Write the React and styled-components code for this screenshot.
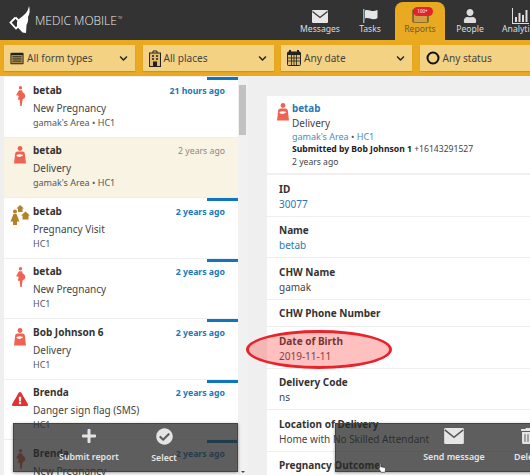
import React from "react";
import styled, { createGlobalStyle } from "styled-components";
import { FaUser, FaPlus, FaCheckCircle, FaChevronDown, FaTrashAlt, FaExclamationTriangle } from "react-icons/fa";

const GlobalStyle = createGlobalStyle`
  html, body {
    margin: 0;
    height: 475px;
    overflow: hidden;
    background: #efefef;
    font-family: "Noto Sans", "Open Sans", sans-serif;
    color: #333;
  }
`;

const reports = [
  { name: "betab", form: "New Pregnancy", place: "gamak's Area • HC1", time: "21 hours ago", icon: "pregnant", unread: true },
  { name: "betab", form: "Delivery", place: "gamak's Area • HC1", time: "2 years ago", icon: "delivery", selected: true },
  { name: "betab", form: "Pregnancy Visit", place: "HC1", time: "2 years ago", icon: "visit", unread: true },
  { name: "betab", form: "New Pregnancy", place: "HC1", time: "2 years ago", icon: "pregnant", unread: true },
  { name: "Bob Johnson 6", form: "Delivery", place: "HC1", time: "2 years ago", icon: "delivery", unread: true },
  { name: "Brenda", form: "Danger sign flag (SMS)", place: "HC1", time: "2 years ago", icon: "danger", unread: true },
  { name: "Brenda", form: "New Pregnancy", place: "HC1", time: "2 years ago", icon: "pregnant", unread: true },
];

const fields = [
  { label: "ID", value: "30077", link: true },
  { label: "Name", value: "betab", link: true },
  { label: "CHW Name", value: "gamak" },
  { label: "CHW Phone Number" },
  { label: "Date of Birth", value: "2019-11-11" },
  { label: "Delivery Code", value: "ns" },
  { label: "Location of Delivery", value: "Home with No Skilled Attendant" },
  { label: "Pregnancy Outcome" },
];

const Logo = () => (
  <svg width="22" height="30" viewBox="0 0 22 30" fill="#fff">
    <path d="M20 1c1.200 4 .8 8-1 11 .6 3-.4 6-1.500 8L17 28l-3.500-.5L8 21.500V17c2-4 6-5.500 8.500-8.500C18.300 6.500 19.400 4 20 1z" />
    <path d="M6.500 12.500L1.500 17.500l5.500 6 2-2" fill="none" stroke="#fff" strokeWidth="1.800" />
    <path d="M6.500 12.500L10 16" fill="none" stroke="#fff" strokeWidth="1.800" />
  </svg>
);

const Pregnant = ({ color = "#ee6352" }) => (
  <svg width="11" height="20" viewBox="0 0 11 20" fill={color}>
    <circle cx="5.500" cy="1.800" r="1.700" />
    <path d="M4 4.200h3l.8 2.300c1.900 1 2.800 2.600 2.400 4.300-.3 1.200-1.200 2-2.400 2.200L7.400 15l-.7 5H5.300l-.6-6.200H2.800l.9-4L1 9.200z" />
  </svg>
);

const Delivery = () => (
  <svg width="12" height="18" viewBox="0 0 12 18" fill="#ee6352">
    <circle cx="6" cy="2.500" r="2.400" />
    <path d="M3.500 5.500h5c1.300 0 2.100.8 2.300 2L12 17.500H0l1.200-10c.2-1.200 1-2 2.300-2z" />
    <path d="M2.600 9c1.500-1 4-1.200 6-.2.600.4.300 1.200-.4 1.200-1 0-1.400 1-2.700 1-1.700 0-3.400-.9-2.900-2z" fill="#fff" />
  </svg>
);

const Visit = () => (
  <svg width="20" height="20" viewBox="0 0 20 20" fill="#b5802a">
    <circle cx="5" cy="6.500" r="2" />
    <path d="M3.500 9h3l3 7.500H7V20H3v-3.500H.5z" />
    <path d="M10 0L6.500 3.500H8v3.500h4.500V3.500H14z" />
    <path d="M15.500 6.500L11 10.500h1.500v4h6v-4H20z" />
  </svg>
);

const ReportIcon = ({ kind }) => {
  if (kind === "pregnant") return <Pregnant />;
  if (kind === "delivery") return <Delivery />;
  if (kind === "visit") return <Visit />;
  return <FaExclamationTriangle size={16} color="#e33030" />;
};

const FormIcon = () => (
  <svg width="14" height="13" viewBox="0 0 16 14">
    <rect x=".5" y=".5" width="15" height="13" rx="1" fill="#222" />
    <rect x="1.500" y="3" width="13" height="9.500" fill="#a98a4a" />
    <path d="M3 5h10M3 7.500h10M3 10h10" stroke="#222" />
  </svg>
);

const PlaceIcon = () => (
  <svg width="12" height="17" viewBox="0 0 12 17" fill="none" stroke="#222">
    <path d="M4 3V1h4v2" />
    <rect x=".5" y="3" width="11" height="13.500" fill="#e0bd6a" />
    <path d="M3 6h2M7 6h2M3 9h2M7 9h2" strokeWidth="1.500" />
    <rect x="4.500" y="12" width="3" height="4.500" fill="#222" />
  </svg>
);

const DateIcon = () => (
  <svg width="14" height="16" viewBox="0 0 14 16">
    <rect x=".5" y="2" width="13" height="13.500" rx="1" fill="#e0bd6a" stroke="#222" />
    <rect x="1" y="2" width="12" height="3" fill="#222" />
    <path d="M3 0v3M11 0v3" stroke="#222" strokeWidth="2" />
    <path d="M1 8h12M1 11h12M4.500 5v10M7 5v10M9.500 5v10" stroke="#222" strokeWidth=".8" />
  </svg>
);

const StatusIcon = () => (
  <svg width="14" height="14" viewBox="0 0 14 14" fill="none">
    <circle cx="7" cy="7" r="5.500" stroke="#111" strokeWidth="2" />
  </svg>
);

const EnvelopeIcon = ({ w = 16, h = 13, line = "#333" }) => (
  <svg width={w} height={h} viewBox="0 0 16 13">
    <rect width="16" height="13" rx="1" fill="#e6e6e6" />
    <path d="M.5 1.500L8 7.500l7.500-6" fill="none" stroke={line} strokeWidth="1.200" />
  </svg>
);

const FlagIcon = () => (
  <svg width="15" height="14" viewBox="0 0 15 14">
    <path d="M.8 0v14" stroke="#9fc3d8" strokeWidth="1.300" />
    <path d="M2 1.500c3-1.500 6 1 9 .5 1.500-.2 2.500-.7 3.500-1v8c-1.200.8-2.500 1.200-4 1.200-3 0-5.500-2-8.500-.8z" fill="#e6e6e6" />
  </svg>
);

const BarsIcon = () => (
  <svg width="17" height="16" viewBox="0 0 17 16" fill="#ddd">
    <path d="M0 0h1v15h16v1H0z" />
    <path d="M3 9h2v5H3zM6.500 5h2v9h-2zM10 7h2v7h-2zM13.500 2h2v12h-2z" />
  </svg>
);

const ReportsTabIcon = () => (
  <svg width="17" height="14" viewBox="0 0 17 14">
    <rect x=".5" y=".5" width="16" height="13" rx="1" fill="#333" />
    <rect x="1.500" y="4" width="14" height="9" fill="#cfa043" />
  </svg>
);

const HandCursor = () => (
  <svg width="8" height="11" viewBox="0 0 10 13">
    <path d="M2.500 1c.6 0 1 .4 1 1v3.500L8 6.500c1 .3 1.500.8 1.500 1.800L9 11.500 8.500 12.500H4L1 8c-.4-.8.4-1.400 1-1L2 7.500V2c0-.6 0-1 .5-1z" fill="#fff" stroke="#222" strokeWidth=".7" />
  </svg>
);

const App = () => (
  <Page>
    <GlobalStyle />
    <Header>
      <Brand>
        <Logo />
        <BrandName>
          MEDIC MOBILE<sup>TM</sup>
        </BrandName>
      </Brand>
      <Tabs>
        <Tab>
          <TabIcon><EnvelopeIcon /></TabIcon>
          Messages
        </Tab>
        <Tab>
          <TabIcon><FlagIcon /></TabIcon>
          Tasks
        </Tab>
        <Tab $active>
          <TabIcon>
            <ReportsTabIcon />
            <Badge>100+</Badge>
          </TabIcon>
          Reports
        </Tab>
        <Tab>
          <TabIcon><FaUser size={14} /></TabIcon>
          People
        </Tab>
        <Tab>
          <TabIcon><BarsIcon /></TabIcon>
          Analytics
        </Tab>
      </Tabs>
    </Header>
    <Filters>
      <Filter>
        <FormIcon />
        <FilterLabel>All form types</FilterLabel>
        <FaChevronDown size={9} />
      </Filter>
      <Filter>
        <PlaceIcon />
        <FilterLabel>All places</FilterLabel>
        <FaChevronDown size={9} />
      </Filter>
      <Filter>
        <DateIcon />
        <FilterLabel>Any date</FilterLabel>
        <FaChevronDown size={9} />
      </Filter>
      <Filter $wide>
        <StatusIcon />
        <FilterLabel>Any status</FilterLabel>
      </Filter>
    </Filters>
    <Main>
      <ListColumn>
        <List>
          {reports.map((r, i) => (
            <Row key={i} $selected={r.selected} $unread={r.unread}>
              <RowIcon $kind={r.icon}><ReportIcon kind={r.icon} /></RowIcon>
              <RowBody>
                <RowTop>
                  <RowName>{r.name}</RowName>
                  <RowTime $unread={r.unread}>{r.time}</RowTime>
                </RowTop>
                <RowForm>{r.form}</RowForm>
                <RowPlace>{r.place}</RowPlace>
              </RowBody>
            </Row>
          ))}
        </List>
        <Scrollbar>
          <Thumb />
          <ScrollArrow />
        </Scrollbar>
        <FloatBar $left $pad="25px">
          <FloatAction $w="100px">
            <FaPlus size={16} />
            Submit report
          </FloatAction>
          <FloatAction $w="50px">
            <FaCheckCircle size={17} />
            Select
          </FloatAction>
        </FloatBar>
      </ListColumn>
      <Detail>
        <DetailHead>
          <DetailIcon><Delivery /></DetailIcon>
          <DetailText>
            <DetailName>betab</DetailName>
            <DetailForm>Delivery</DetailForm>
            <DetailPlace>gamak's Area <Dot>•</Dot> HC1</DetailPlace>
            <DetailSub><b>Submitted by Bob Johnson 1</b> +16143291527</DetailSub>
            <DetailSub>2 years ago</DetailSub>
          </DetailText>
        </DetailHead>
        {fields.map((f) => (
          <Field key={f.label}>
            <FieldLabel>{f.label}</FieldLabel>
            {f.value && <FieldValue $link={f.link}>{f.value}</FieldValue>}
          </Field>
        ))}
      </Detail>
      <Highlight />
      <FloatBar $pad="68px">
        <FloatAction $w="100px">
          <EnvelopeIcon w={20} h={16} line="#555" />
          Send message
        </FloatAction>
        <FloatAction $w="48px">
          <FaTrashAlt size={16} />
          Delete
        </FloatAction>
      </FloatBar>
      <Cursor><HandCursor /></Cursor>
    </Main>
  </Page>
);

const Page = styled.div`
  width: 530px;
  height: 475px;
  overflow: hidden;
  position: relative;
`;

const Header = styled.header`
  display: flex;
  justify-content: space-between;
  height: 40px;
  background: #333;
`;

const Brand = styled.div`
  display: flex;
  align-items: center;
  gap: 4px;
  padding: 0 0 0 9px;
`;

const BrandName = styled.span`
  color: #ececec;
  font-family: "Open Sans", sans-serif;
  font-weight: 300;
  font-size: 12px;
  white-space: nowrap;
  sup {
    font-size: 3px;
    vertical-align: 6px;
    margin-left: 1px;
  }
`;

const Tabs = styled.nav`
  display: flex;
  width: 250px;
  margin-right: -15px;
  flex: none;
`;

const Tab = styled.div`
  width: 50px;
  flex: none;
  display: flex;
  flex-direction: column;
  align-items: center;
  padding-top: ${(p) => (p.$active ? "6px" : "8px")};
  box-sizing: border-box;
  margin-top: ${(p) => (p.$active ? "2px" : "0")};
  border-radius: 8px 8px 0 0;
  background: ${(p) => (p.$active ? "#e9aa22" : "transparent")};
  color: ${(p) => (p.$active ? "#6b5b35" : "#ddd")};
  font-size: 8.600px;
  line-height: 10px;
  white-space: nowrap;
`;

const TabIcon = styled.span`
  position: relative;
  height: 16px;
  display: flex;
  align-items: center;
  justify-content: center;
`;

const Badge = styled.span`
  position: absolute;
  top: -1px;
  left: 1px;
  width: 20px;
  height: 9px;
  border-radius: 5px;
  background: #e2232e;
  color: #fff;
  font-size: 4.500px;
  line-height: 9px;
  text-align: center;
`;

const Filters = styled.div`
  display: flex;
  gap: 7.500px;
  height: 36px;
  padding: 5px 0 0 4px;
  box-sizing: border-box;
  background: #e9aa22;
`;

const Filter = styled.div`
  flex: none;
  width: ${(p) => (p.$wide ? "140px" : "131px")};
  height: 26px;
  display: flex;
  align-items: center;
  gap: 3px;
  padding: 0 7px 0 6px;
  box-sizing: border-box;
  background: #f3d283;
  color: #222;
  font-size: 10.100px;
  box-shadow: 0 1px 1px rgba(0, 0, 0, 0.12);
`;

const FilterLabel = styled.span`
  flex: 1;
  color: #444;
`;

const Main = styled.main`
  position: relative;
  display: flex;
  height: 399px;
`;

const ListColumn = styled.section`
  flex: none;
  width: 248px;
  display: flex;
  padding: 1px 0 0 4px;
  box-sizing: border-box;
`;

const List = styled.div`
  width: 234px;
  flex: none;
`;

const Row = styled.article`
  position: relative;
  height: 60.500px;
  box-sizing: border-box;
  display: flex;
  padding: 4.500px 13px 0 0;
  background: ${(p) => (p.$selected ? "#f9f3e3" : "#fff")};
  border-bottom: 1px solid #eee;
  &::before {
    content: "";
    display: ${(p) => (p.$unread ? "block" : "none")};
    position: absolute;
    top: 0;
    right: 0;
    width: 31px;
    height: 3px;
    background: #0f75bc;
  }
`;

const RowIcon = styled.div`
  width: 29px;
  flex: none;
  display: flex;
  justify-content: center;
  padding: ${(p) => (p.$kind === "danger" ? "7px" : p.$kind === "visit" ? "2px" : "4px")} 0 0 3px;
  box-sizing: border-box;
`;

const RowBody = styled.div`
  flex: 1;
  min-width: 0;
`;

const RowTop = styled.div`
  display: flex;
  justify-content: space-between;
  align-items: baseline;
  height: 18px;
`;

const RowName = styled.span`
  font-size: 10px;
  font-weight: 700;
  line-height: 17px;
`;

const RowTime = styled.span`
  font-size: 8.700px;
  line-height: 17px;
  font-weight: ${(p) => (p.$unread ? 700 : 400)};
  color: ${(p) => (p.$unread ? "#1a77b8" : "#888")};
`;

const RowForm = styled.div`
  font-size: 10px;
  line-height: 16px;
  color: #444;
`;

const RowPlace = styled.div`
  font-size: 9px;
  line-height: 14px;
  color: #555;
`;

const Scrollbar = styled.div`
  flex: none;
  width: 10px;
  background: #f1f1f1;
  display: flex;
  flex-direction: column;
  justify-content: space-between;
  align-items: flex-start;
`;

const Thumb = styled.div`
  width: 7px;
  height: 50px;
  margin: 8px 0 0 1px;
  background: #c1c1c1;
`;

const ScrollArrow = styled.div`
  margin: 0 0 2px 3px;
  width: 0;
  height: 0;
  border-left: 2px solid transparent;
  border-right: 2px solid transparent;
  border-top: 2px solid #444;
`;

const FloatBar = styled.div`
  position: absolute;
  top: 347px;
  left: ${(p) => (p.$left ? "13px" : "335px")};
  width: ${(p) => (p.$left ? "225px" : "215px")};
  height: 49px;
  display: flex;
  padding-left: ${(p) => p.$pad};
  box-sizing: border-box;
  background: rgba(40, 40, 40, 0.75);
  border: 1px solid #444;
  box-shadow: 0 1px 3px rgba(0, 0, 0, 0.4);
  z-index: 2;
`;

const FloatAction = styled.div`
  width: ${(p) => p.$w};
  flex: none;
  display: flex;
  flex-direction: column;
  align-items: center;
  gap: 7px;
  padding-top: 4px;
  color: #e4e4e4;
  font-size: 8.800px;
  font-weight: 600;
  line-height: 12px;
  white-space: nowrap;
`;

const Detail = styled.section`
  flex: none;
  width: 263px;
  margin: 20px 0 0 19px;
  background: #fff;
`;

const DetailHead = styled.div`
  display: flex;
  gap: 3px;
  height: 79px;
  padding: 6px 0 0 10px;
  box-sizing: border-box;
  border-bottom: 2px solid #f0f0f0;
`;

const DetailIcon = styled.div`
  padding-top: 1px;
`;

const DetailText = styled.div`
  line-height: 13px;
`;

const DetailName = styled.div`
  font-size: 9.800px;
  font-weight: 700;
  line-height: 14px;
  color: #2a78b5;
`;

const DetailForm = styled.div`
  font-size: 10px;
  line-height: 15px;
  color: #444;
`;

const DetailPlace = styled.div`
  color: #4a8cc2;
  font-size: 9px;
  line-height: 12px;
`;

const Dot = styled.span`
  color: #555;
`;

const DetailSub = styled.div`
  font-size: 8.600px;
  line-height: 13px;
  color: #444;
  white-space: nowrap;
  b {
    color: #222;
  }
`;

const Field = styled.div`
  padding: 6.500px 0 5px 12px;
  border-bottom: 1px solid #eee;
`;

const FieldLabel = styled.div`
  font-size: 10px;
  font-weight: 700;
  line-height: 15px;
  color: #333;
`;

const FieldValue = styled.div`
  font-size: 10px;
  line-height: 14px;
  color: ${(p) => (p.$link ? "#2a78b5" : "#444")};
`;

const Highlight = styled.div`
  position: absolute;
  left: 246px;
  top: 254px;
  width: 146px;
  height: 39px;
  border: 3px solid #e8232b;
  border-radius: 50%;
  box-sizing: border-box;
  background: rgba(255, 60, 60, 0.32);
`;

const Cursor = styled.div`
  position: absolute;
  left: 378px;
  top: 380px;
  z-index: 3;
`;

export default App;
